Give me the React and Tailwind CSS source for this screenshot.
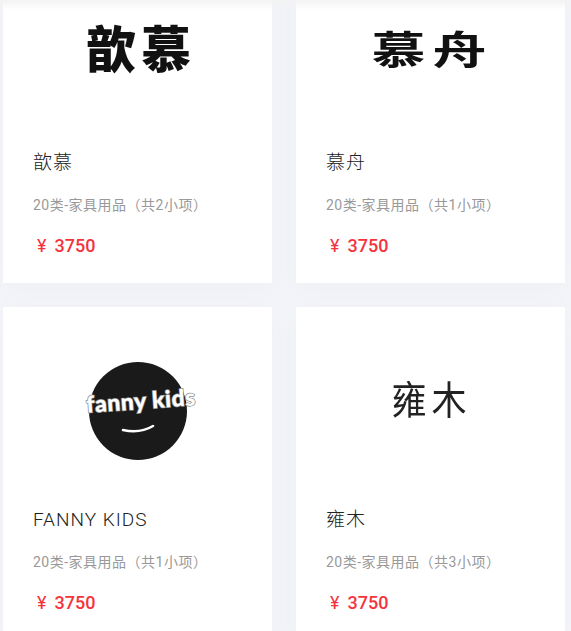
const ITEMS = [
  { name: "歆慕", desc: "20类-家具用品（共2小项）", logo: "xinmu" },
  { name: "慕舟", desc: "20类-家具用品（共1小项）", logo: "muzhou" },
  { name: "FANNY KIDS", desc: "20类-家具用品（共1小项）", logo: "fanny" },
  { name: "雍木", desc: "20类-家具用品（共3小项）", logo: "yongmu" },
];

const CJK = "font-['Noto_Sans_CJK_SC',sans-serif]";

function Logo({ type }) {
  if (type === "xinmu") {
    return (
      <div className={`${CJK} -mt-[7px] ml-[7px] text-[50px] leading-none font-black tracking-[5px] text-[#111] blur-[0.4px]`}>
        歆慕
      </div>
    );
  }
  if (type === "muzhou") {
    return (
      <div className={`${CJK} -mt-[5px] ml-[4px] scale-y-[0.72] text-[54px] leading-none font-bold tracking-[7px] text-[#111] blur-[0.5px]`}>
        慕舟
      </div>
    );
  }
  if (type === "yongmu") {
    return (
      <div className={`${CJK} -mt-[20px] ml-[2px] scale-y-[1.12] text-[35px] leading-none tracking-[5px] text-[#222] blur-[0.3px]`}>
        雍木
      </div>
    );
  }
  return (
    <div className="mt-[10px] flex h-[98px] w-[98px] flex-col items-center justify-center rounded-full bg-[#1a1a1a]">
      <span className="mt-[1px] ml-[7px] -rotate-[4deg] font-['Lato',sans-serif] text-[23px] leading-none font-black tracking-[0.5px] whitespace-nowrap text-white [paint-order:stroke_fill] [-webkit-text-stroke:1.5px_#888]">
        fanny kids
      </span>
      <svg className="mt-[12px]" width="36" height="10" viewBox="0 0 36 10" fill="none">
        <path d="M3 6c9 2 20 2 30-4" stroke="#fff" strokeWidth="2.5" strokeLinecap="round" />
      </svg>
    </div>
  );
}

function Card({ item }) {
  return (
    <div className="h-[333px] bg-white pl-[30px] shadow-[0_8px_20px_rgba(225,228,238,0.3)]">
      <div className="-ml-[30px] flex h-[198px] items-center justify-center">
        <Logo type={item.logo} />
      </div>
      <div className="mt-[1px] font-['Roboto','Noto_Sans_CJK_SC',sans-serif] text-[19px] leading-[28px] font-light tracking-[1px] text-[#222]">
        {item.name}
      </div>
      <div className="mt-[18px] font-['Roboto','Noto_Sans_CJK_SC',sans-serif] text-[14px] leading-[20px] tracking-[0.5px] text-[#999]">
        {item.desc}
      </div>
      <div className="mt-[18px] flex items-center pl-[4px] font-['Roboto','Noto_Sans_CJK_SC',sans-serif] text-[18px] leading-[26px] font-medium text-[#f4333c]">
        <span className="mr-[8px] font-normal">¥</span>
        <span>3750</span>
      </div>
    </div>
  );
}

export default function App() {
  return (
    <div className="relative h-[631px] w-[571px] overflow-hidden bg-[#f4f5f9]">
      <div className="-mt-[50px] grid grid-cols-[269px_269px] gap-x-[24px] gap-y-[24px] pl-[3px]">
        {ITEMS.map((item) => (
          <Card key={item.name} item={item} />
        ))}
      </div>
      <div className="absolute top-0 left-0 h-[10px] w-full bg-gradient-to-b from-[#f3f3f4] to-transparent" />
    </div>
  );
}
